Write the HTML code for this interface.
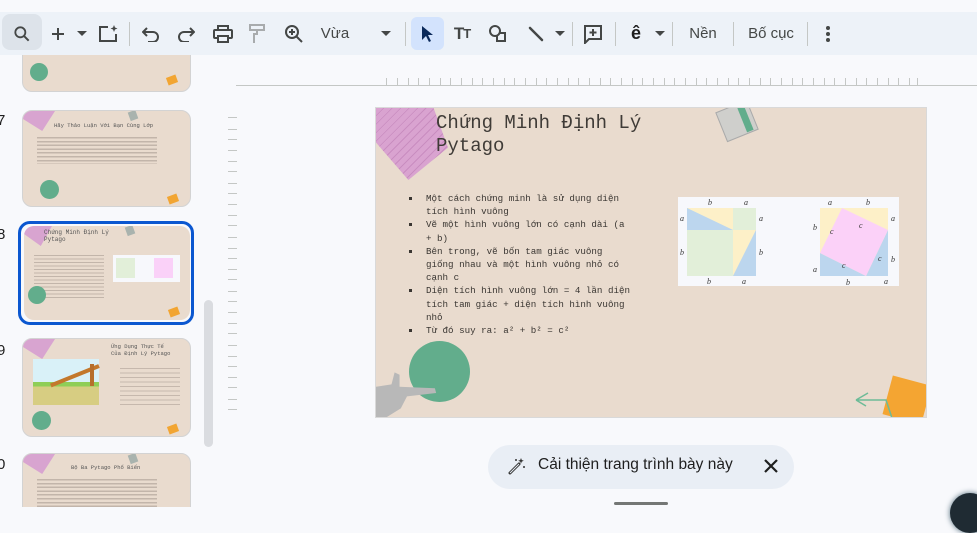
<!DOCTYPE html>
<html><head><meta charset="utf-8">
<style>
*{box-sizing:border-box;margin:0;padding:0}
body{width:977px;height:507px;overflow:hidden;background:#f8f9fc;font-family:"Liberation Sans",sans-serif;position:relative;color:#444746}
.abs{position:absolute}
.tb{position:absolute;left:0;top:12px;width:977px;height:43px;background:#edf2f8}
.ic{position:absolute;top:0;height:43px;display:flex;align-items:center;justify-content:center}
.sep{position:absolute;top:10px;width:1px;height:24px;background:#c4c7c5}
.thumb{position:absolute;left:22px;width:169px;border:1px solid #d3d3d3;border-radius:10px;background:#e9dbce;overflow:hidden}
.num{position:absolute;left:-3px;font-size:15px;color:#1f1f1f}
.mono{font-family:"Liberation Mono","DejaVu Sans Mono",monospace}
.slide{position:absolute;left:375px;top:107px;width:552px;height:311px;background:#e9dbce;overflow:hidden;border:1px solid #d9d9d9}
ul.b{list-style:none}
ul.b li{position:relative;padding-left:17px;font-size:9.2px;line-height:13.2px;color:#3a3632}
ul.b li:before{content:"";position:absolute;left:0;top:5px;width:3px;height:3px;background:#3a3632}
</style></head><body>

<div class="tb">
  <div class="abs" style="left:2px;top:2px;width:40px;height:36px;background:#dde3ea;border-radius:8px"></div>
  <div class="ic" style="left:8px;width:28px"><svg width="20" height="20" viewBox="0 0 24 24"><circle cx="10" cy="10" r="6" fill="none" stroke="#444746" stroke-width="2.2"/><path d="M14.5 14.5L20 20" stroke="#444746" stroke-width="2.4"/></svg></div>
  <div class="ic" style="left:48px;width:20px"><svg width="16" height="16"><path d="M8 2v12M2 8h12" stroke="#444746" stroke-width="2"/></svg></div>
  <div class="ic" style="left:74px;width:16px"><svg width="10" height="6"><path d="M0 0h10L5 5z" fill="#444746"/></svg></div>
  <div class="ic" style="left:96px;width:24px"><svg width="22" height="20" viewBox="0 0 22 20"><path d="M11 3H3v14h16V10" fill="none" stroke="#444746" stroke-width="2"/><path d="M17 1l1 2.5 2.5 1-2.5 1-1 2.5-1-2.5-2.5-1 2.5-1z" fill="#444746"/></svg></div>
  <div class="sep" style="left:129px"></div>
  <div class="ic" style="left:140px;width:22px"><svg width="18" height="16" viewBox="0 0 18 16"><path d="M5 2L1 6l4 4" fill="none" stroke="#444746" stroke-width="2"/><path d="M1 6h10a5 5 0 010 10H6" fill="none" stroke="#444746" stroke-width="2"/></svg></div>
  <div class="ic" style="left:175px;width:22px"><svg width="18" height="16" viewBox="0 0 18 16"><path d="M13 2l4 4-4 4" fill="none" stroke="#444746" stroke-width="2"/><path d="M17 6H7a5 5 0 000 10h5" fill="none" stroke="#444746" stroke-width="2"/></svg></div>
  <div class="ic" style="left:211px;width:24px"><svg width="20" height="18" viewBox="0 0 20 18"><rect x="5" y="1" width="10" height="4" fill="none" stroke="#444746" stroke-width="2"/><rect x="1" y="5" width="18" height="8" rx="1" fill="none" stroke="#444746" stroke-width="2"/><rect x="5" y="11" width="10" height="6" fill="#edf2f8" stroke="#444746" stroke-width="2"/></svg></div>
  <div class="ic" style="left:247px;width:20px"><svg width="16" height="20" viewBox="0 0 16 20"><rect x="1" y="1" width="14" height="5" fill="none" stroke="#a8abad" stroke-width="2"/><path d="M8 6v4H5v9" fill="none" stroke="#a8abad" stroke-width="2"/></svg></div>
  <div class="ic" style="left:283px;width:22px"><svg width="20" height="20" viewBox="0 0 20 20"><circle cx="8" cy="8" r="6" fill="none" stroke="#444746" stroke-width="2"/><path d="M8 5v6M5 8h6M12.5 12.5L18 18" stroke="#444746" stroke-width="2"/></svg></div>
  <div class="ic" style="left:318px;width:34px;font-size:15px;color:#444746">Vừa</div>
  <div class="ic" style="left:378px;width:16px"><svg width="10" height="6"><path d="M0 0h10L5 5z" fill="#444746"/></svg></div>
  <div class="sep" style="left:405px"></div>
  <div class="abs" style="left:411px;top:5px;width:33px;height:33px;background:#d3e3fd;border-radius:6px"></div>
  <div class="ic" style="left:416px;width:22px"><svg width="14" height="18" viewBox="0 0 14 18"><path d="M2 1v14l4-4 3 6 2-1-3-6h5z" fill="#0b2a5b"/></svg></div>
  <div class="ic" style="left:450px;width:24px;font-size:17px;font-weight:bold;color:#444746;letter-spacing:-1px">T<span style="font-size:13px">T</span></div>
  <div class="ic" style="left:487px;width:22px"><svg width="20" height="20" viewBox="0 0 20 20"><circle cx="7" cy="7" r="5" fill="none" stroke="#444746" stroke-width="2"/><path d="M11 9h6v8H9v-5" fill="none" stroke="#444746" stroke-width="2"/></svg></div>
  <div class="ic" style="left:525px;width:22px"><svg width="16" height="16"><path d="M2 2l12 12" stroke="#444746" stroke-width="2.5" stroke-linecap="round"/></svg></div>
  <div class="ic" style="left:552px;width:16px"><svg width="10" height="6"><path d="M0 0h10L5 5z" fill="#444746"/></svg></div>
  <div class="sep" style="left:572px"></div>
  <div class="ic" style="left:582px;width:22px"><svg width="20" height="20" viewBox="0 0 20 20"><path d="M2 2h16v13H6l-4 4z" fill="none" stroke="#444746" stroke-width="2"/><path d="M10 5v7M6.5 8.5h7" stroke="#444746" stroke-width="2"/></svg></div>
  <div class="sep" style="left:615px"></div>
  <div class="ic" style="left:625px;width:22px;font-size:18px;font-weight:bold;color:#1f1f1f">ê</div>
  <div class="ic" style="left:652px;width:16px"><svg width="10" height="6"><path d="M0 0h10L5 5z" fill="#444746"/></svg></div>
  <div class="sep" style="left:672px"></div>
  <div class="ic" style="left:682px;width:42px;font-size:15px">Nền</div>
  <div class="sep" style="left:733px"></div>
  <div class="ic" style="left:742px;width:58px;font-size:15px">Bố cục</div>
  <div class="sep" style="left:807px"></div>
  <div class="ic" style="left:820px;width:16px"><svg width="4" height="16"><circle cx="2" cy="2" r="2" fill="#444746"/><circle cx="2" cy="8" r="2" fill="#444746"/><circle cx="2" cy="14" r="2" fill="#444746"/></svg></div>
</div>

<div class="abs" style="left:0;top:55px;width:225px;height:452px;overflow:hidden">
  <div class="thumb" style="top:-60px;height:97px">
    <div class="abs" style="left:7px;top:67px;width:18px;height:18px;border-radius:50%;background:#62ad8c"></div>
    <div class="abs" style="left:144px;top:80px;width:10px;height:8px;background:#f2a532;transform:rotate(-20deg)"></div>
  </div>
  <div class="num" style="top:57px">7</div>
  <div class="thumb" style="top:55px;height:97px">
    <div class="abs" style="left:0;top:0;width:32px;height:20px;background:#d8a4d0;clip-path:polygon(0 0,100% 0,60% 100%,0 40%)"></div>
    <div class="abs" style="left:106px;top:0;width:8px;height:9px;background:#a9b3ae;transform:rotate(-20deg)"></div>
    <div class="abs" style="left:31px;top:11px;font-size:5.5px;color:#555;font-family:'Liberation Mono',monospace">Hãy Thảo Luận Với Bạn Cùng Lớp</div>
    <div class="abs" style="left:14px;top:25px;width:120px;height:28px;background:repeating-linear-gradient(#e9dbce 0 1px,#a99c92 1px 2.5px,#e9dbce 2.5px 3.8px);opacity:.6"></div>
    <div class="abs" style="left:17px;top:69px;width:19px;height:19px;border-radius:50%;background:#62ad8c"></div>
    <div class="abs" style="left:145px;top:84px;width:10px;height:8px;background:#f2a532;transform:rotate(-20deg)"></div>
  </div>
  <div class="num" style="top:171px">8</div>
  <div class="abs" style="left:18px;top:166px;width:176px;height:104px;border:3px solid #0b57d0;border-radius:12px"></div>
  <div class="thumb" style="top:171px;height:94px;left:24px;width:166px;border:none">
    <div class="abs" style="left:0;top:0;width:28px;height:20px;background:#d8a4d0;clip-path:polygon(0 0,100% 0,60% 100%,0 40%)"></div>
    <div class="abs" style="left:102px;top:0;width:8px;height:9px;background:#a9b3ae;transform:rotate(-20deg)"></div>
    <div class="abs" style="left:20px;top:3px;font-size:6px;line-height:7px;color:#555;font-family:'Liberation Mono',monospace">Chứng Minh Định Lý<br>Pytago</div>
    <div class="abs" style="left:10px;top:28px;width:70px;height:45px;background:repeating-linear-gradient(#e9dbce 0 1px,#a99c92 1px 2px,#e9dbce 2px 3.5px);opacity:.6"></div>
    <div class="abs" style="left:89px;top:29px;width:67px;height:27px;background:#f7f8fc"></div>
    <div class="abs" style="left:92px;top:32px;width:19px;height:20px;background:#e2efd9"></div>
    <div class="abs" style="left:130px;top:32px;width:19px;height:20px;background:#fad1f8"></div>
    <div class="abs" style="left:4px;top:60px;width:18px;height:18px;border-radius:50%;background:#62ad8c"></div>
    <div class="abs" style="left:145px;top:82px;width:10px;height:8px;background:#f2a532;transform:rotate(-20deg)"></div>
  </div>
  <div class="num" style="top:287px">9</div>
  <div class="thumb" style="top:283px;height:99px">
    <div class="abs" style="left:0;top:0;width:32px;height:20px;background:#d8a4d0;clip-path:polygon(0 0,100% 0,60% 100%,0 40%)"></div>
    <div class="abs" style="left:88px;top:4px;font-size:5.5px;line-height:7px;color:#555;font-family:'Liberation Mono',monospace">Ứng Dụng Thực Tế<br>Của Định Lý Pytago</div>
    <div class="abs" style="left:10px;top:20px;width:66px;height:46px;background:linear-gradient(#d9f1f8 0 50%,#8fce57 50% 60%,#d7cd82 60%)"></div>
    <div class="abs" style="left:24px;top:25px;width:52px;height:4px;background:#c3782c;transform:rotate(-22deg);transform-origin:right;"></div>
    <div class="abs" style="left:67px;top:25px;width:4px;height:22px;background:#b66f2c"></div>
    <div class="abs" style="left:97px;top:28px;width:60px;height:40px;background:repeating-linear-gradient(#e9dbce 0 1px,#a99c92 1px 2px,#e9dbce 2px 4.5px);opacity:.55"></div>
    <div class="abs" style="left:9px;top:72px;width:19px;height:19px;border-radius:50%;background:#62ad8c"></div>
    <div class="abs" style="left:145px;top:86px;width:10px;height:8px;background:#f2a532;transform:rotate(-20deg)"></div>
  </div>
  <div class="num" style="top:401px">0</div>
  <div class="thumb" style="top:398px;height:80px">
    <div class="abs" style="left:0;top:0;width:32px;height:20px;background:#d8a4d0;clip-path:polygon(0 0,100% 0,60% 100%,0 40%)"></div>
    <div class="abs" style="left:106px;top:0;width:8px;height:9px;background:#a9b3ae;transform:rotate(-20deg)"></div>
    <div class="abs" style="left:48px;top:10px;font-size:5.5px;color:#555;font-family:'Liberation Mono',monospace">Bộ Ba Pytago Phổ Biến</div>
    <div class="abs" style="left:14px;top:24px;width:120px;height:30px;background:repeating-linear-gradient(#e9dbce 0 1px,#a99c92 1px 2.5px,#e9dbce 2.5px 3.8px);opacity:.6"></div>
  </div>
  <div class="abs" style="left:204px;top:245px;width:9px;height:147px;background:#dadce0;border-radius:5px"></div>
</div>

<div class="abs" style="left:236px;top:85px;width:741px;height:1px;background:#c4c7c5"></div>
<svg class="abs" style="left:0;top:0" width="977" height="507">
  <g stroke="#c4c7c5" stroke-width="1">
  <path d="M386.5 78v7M397.5 78v7M408.5 78v7M418.5 78v7M429.5 78v7M440.5 78v7M450.5 78v7M461.5 78v7M472.5 78v7M482.5 78v7M493.5 78v7M504.5 78v7M514.5 78v7M525.5 78v7M536.5 78v7M546.5 78v7M557.5 78v7M568.5 78v7M578.5 78v7M589.5 78v7M600.5 78v7M610.5 78v7M621.5 78v7M632.5 78v7M642.5 78v7M653.5 78v7M664.5 78v7M674.5 78v7M685.5 78v7M696.5 78v7M706.5 78v7M717.5 78v7M728.5 78v7M738.5 78v7M749.5 78v7M760.5 78v7M770.5 78v7M781.5 78v7M792.5 78v7M802.5 78v7M813.5 78v7M824.5 78v7M834.5 78v7M845.5 78v7M856.5 78v7M866.5 78v7M877.5 78v7M888.5 78v7M898.5 78v7M909.5 78v7M917.5 78v7"/>
  <path d="M228 117.5h9M228 129.5h9M228 139.5h9M228 150.5h9M228 161.5h9M228 171.5h9M228 183.5h9M228 193.5h9M228 204.5h9M228 215.5h9M228 225.5h9M228 237.5h9M228 248.5h9M228 258.5h9M228 269.5h9M228 279.5h9M228 291.5h9M228 301.5h9M228 312.5h9M228 323.5h9M228 333.5h9M228 345.5h9M228 356.5h9M228 366.5h9M228 377.5h9M228 387.5h9M228 399.5h9M228 409.5h9"/>
  </g>
</svg>

<div class="slide">
  <div class="abs" style="left:0;top:0;width:72px;height:72px;background:repeating-linear-gradient(135deg,#d9a3d0 0 5px,#c98dc0 5px 6px);clip-path:polygon(0 0,80% 0,100% 55%,45% 100%,0 48%)"></div>
  <div class="abs" style="left:344px;top:-3px;width:34px;height:32px;background:#cfcfcc;transform:rotate(-22deg);border:1px solid #aaa"></div>
  <div class="abs" style="left:366px;top:-2px;width:7px;height:26px;background:#62ad8c;transform:rotate(-22deg)"></div>
  <div class="abs mono" style="left:60px;top:4px;font-size:19px;line-height:23px;color:#3f3b37">Chứng Minh Định Lý<br>Pytago</div>
  <ul class="b mono abs" style="left:33px;top:84px;width:223px">
    <li>Một cách chứng minh là sử dụng diện tích hình vuông</li>
    <li>Vẽ một hình vuông lớn có cạnh dài (a + b)</li>
    <li>Bên trong, vẽ bốn tam giác vuông giống nhau và một hình vuông nhỏ có cạnh c</li>
    <li>Diện tích hình vuông lớn = 4 lần diện tích tam giác + diện tích hình vuông nhỏ</li>
    <li>Từ đó suy ra: a² + b² = c²</li>
  </ul>
  <svg class="abs" style="left:302px;top:89px" width="221" height="89" viewBox="0 0 221 89" font-family="Liberation Serif,serif" font-style="italic" font-size="8" fill="#333">
    <rect width="221" height="89" fill="#f7f8fc"/>
    <rect x="9" y="11" width="69" height="68" fill="#e2efd9"/>
    <polygon points="9,11 55,11 55,33" fill="#fdf0c8"/>
    <polygon points="9,11 55,33 9,33" fill="#bcd6ee"/>
    <polygon points="55,33 78,33 55,79" fill="#fdf0c8"/>
    <polygon points="78,33 78,79 55,79" fill="#bcd6ee"/>
    <rect x="142" y="11" width="68" height="68" fill="#fdf0c8"/>
    <polygon points="142,56 188,79 142,79" fill="#bcd6ee"/>
    <polygon points="210,33 210,79 188,79" fill="#bcd6ee"/>
    <polygon points="164,11 210,33 188,79 142,56" fill="#fbd1f8"/>
    <text x="30" y="8">b</text><text x="66" y="8">a</text>
    <text x="2" y="24">a</text><text x="81" y="24">a</text>
    <text x="2" y="58">b</text><text x="81" y="58">b</text>
    <text x="29" y="87">b</text><text x="64" y="87">a</text>
    <text x="150" y="8">a</text><text x="188" y="8">b</text>
    <text x="213" y="24">a</text><text x="135" y="33">b</text>
    <text x="152" y="37">c</text><text x="181" y="31">c</text>
    <text x="200" y="64">c</text><text x="213" y="65">b</text>
    <text x="164" y="71">c</text><text x="135" y="75">a</text>
    <text x="168" y="88">b</text><text x="206" y="87">a</text>
  </svg>
  <div class="abs" style="left:33px;top:233px;width:61px;height:61px;border-radius:50%;background:#62ad8c"></div>
  <div class="abs" style="left:0;top:262px;width:62px;height:48px;background:#b8b8b8;clip-path:polygon(0 35%,25% 30%,30% 5%,38% 10%,38% 35%,95% 38%,97% 48%,50% 55%,40% 80%,15% 100%,0 100%)"></div>
  <div class="abs" style="left:511px;top:272px;width:40px;height:40px;background:#f4a532;transform:rotate(15deg)"></div>
  <svg class="abs" style="left:478px;top:282px" width="40" height="30"><path d="M2 10L14 3M2 10l10 6M2 10h30l6 18" fill="none" stroke="#6dbb97" stroke-width="1.5"/></svg>
</div>

<div class="abs" style="left:488px;top:445px;width:306px;height:44px;background:#e9eef5;border-radius:22px"></div>
<svg class="abs" style="left:507px;top:456px" width="20" height="20" viewBox="0 0 20 20"><path d="M3 17L12 8" stroke="#333" stroke-width="3" stroke-linecap="round"/><path d="M3 17L12 8" stroke="#e9eef5" stroke-width="1"/><path d="M14 2l.8 2 2 .8-2 .8-.8 2-.8-2-2-.8 2-.8z" fill="#333"/><circle cx="9" cy="4" r="1" fill="#333"/><circle cx="17" cy="11" r="1" fill="#333"/></svg>
<div class="abs" style="left:538px;top:456px;font-size:15.5px;color:#1f1f1f">Cải thiện trang trình bày này</div>
<svg class="abs" style="left:764px;top:459px" width="14" height="14"><path d="M1 1l12 12M13 1L1 13" stroke="#1f1f1f" stroke-width="2.2"/></svg>
<div class="abs" style="left:614px;top:502px;width:54px;height:3px;background:#747775;border-radius:2px"></div>
<div class="abs" style="left:950px;top:493px;width:40px;height:40px;border-radius:50%;background:#1f2b33;box-shadow:0 0 6px #4f6b7a"></div>
</body></html>
